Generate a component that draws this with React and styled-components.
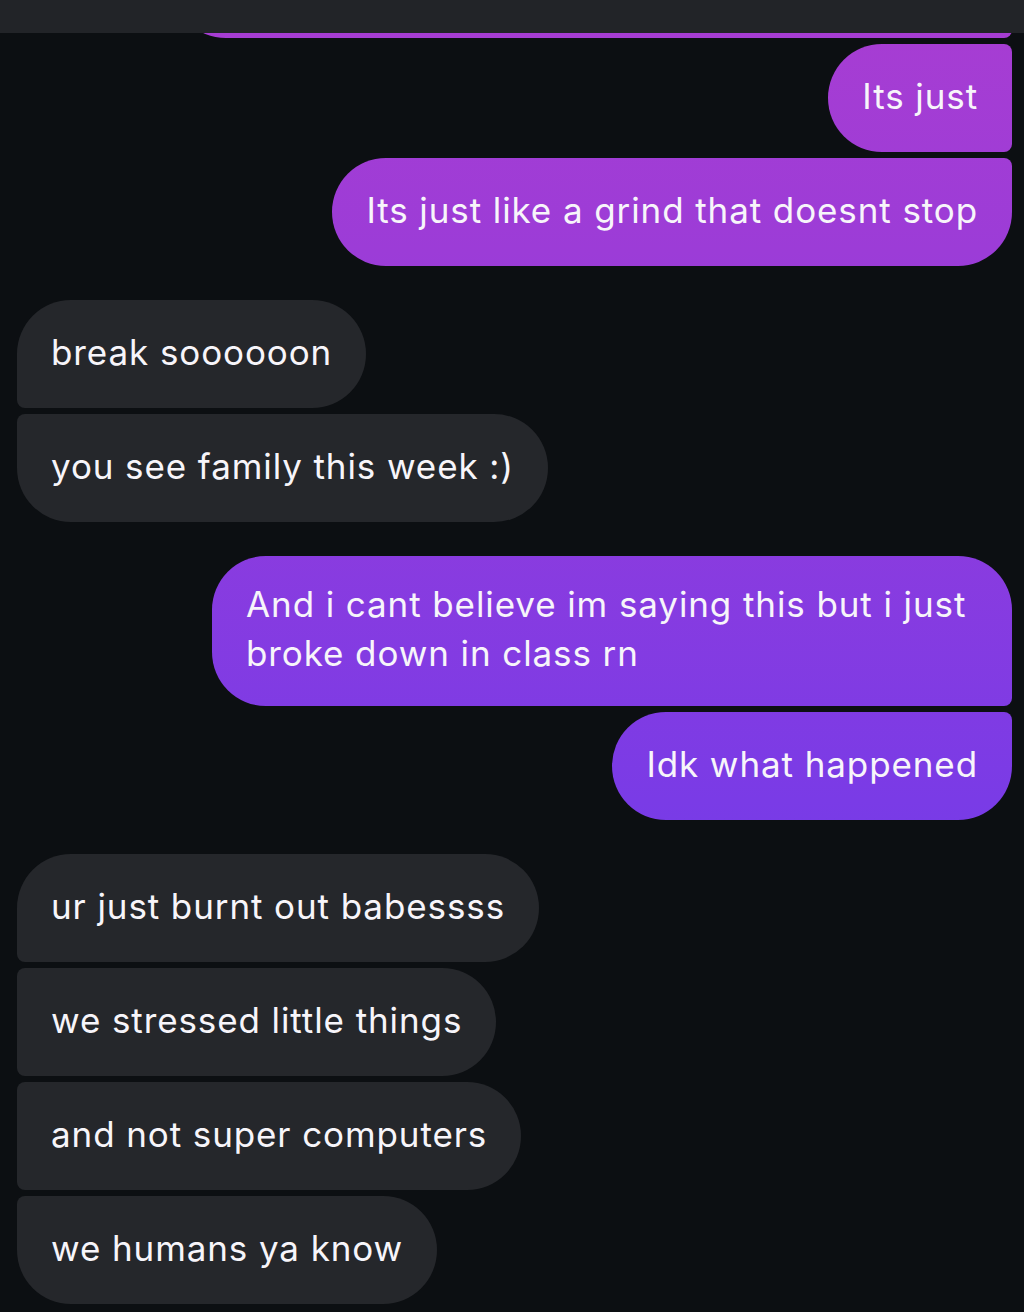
import React from 'react';
import styled, { createGlobalStyle, css } from 'styled-components';

const GlobalStyle = createGlobalStyle`
  html, body {
    margin: 0;
    padding: 0;
    background: #0c0f12;
  }
  * {
    box-sizing: border-box;
  }
`;

const BIG = 54;
const SMALL = 8;

const Screen = styled.div`
  position: relative;
  width: 1024px;
  height: 1312px;
  overflow: hidden;
  background: #0c0f12;
  font-family: Inter, "Noto Sans", sans-serif;
`;

const TopBar = styled.div`
  position: absolute;
  top: 0;
  left: 0;
  right: 0;
  height: 33px;
  background: #222428;
  z-index: 2;
`;

const Thread = styled.div`
  display: flex;
  flex-direction: column;
  gap: 34px;
  padding: 0 12px 0 17px;
  margin-top: -70px;
`;

const Group = styled.div`
  display: flex;
  flex-direction: column;
  align-items: ${props => (props.$mine ? 'flex-end' : 'flex-start')};
  gap: 6px;
`;

const Bubble = styled.div`
  display: flex;
  align-items: center;
  min-height: 108px;
  max-width: ${props => (props.$wide ? 'none' : '800px')};
  padding: 24px 34px 28px;
  font-size: 35px;
  line-height: 49px;
  letter-spacing: 0.9px;
  color: #f7f5fa;
  border-radius: ${props => props.$radius};

  ${props =>
    props.$mine
      ? css`
          background: linear-gradient(180deg, #a83dd2 0px, #9c3cd7 250px, #7a3be6 800px, #5e3af0 1312px) fixed;
        `
      : css`
          background: #25272b;
        `}
`;

const groups = [
  {
    mine: true,
    messages: [
      { hidden: true, width: 840 },
      { text: 'Its just' },
      { text: 'Its just like a grind that doesnt stop' },
    ],
  },
  {
    mine: false,
    messages: [{ text: 'break soooooon' }, { text: 'you see family this week :)' }],
  },
  {
    mine: true,
    messages: [
      { text: 'And i cant believe im saying this but i just broke down in class rn' },
      { text: 'Idk what happened' },
    ],
  },
  {
    mine: false,
    messages: [
      { text: 'ur just burnt out babessss' },
      { text: 'we stressed little things' },
      { text: 'and not super computers' },
      { text: 'we humans ya know' },
    ],
  },
];

// corners: outer side always round, inner side squared off where the group continues
const cornerRadius = (mine, first, last) => {
  const top = first ? BIG : SMALL;
  const bottom = last ? BIG : SMALL;
  return mine
    ? `${BIG}px ${top}px ${bottom}px ${BIG}px`
    : `${top}px ${BIG}px ${BIG}px ${bottom}px`;
};

const App = () => {
  return (
    <Screen>
      <GlobalStyle />
      <TopBar />
      <Thread>
        {groups.map((group, gi) => (
          <Group key={gi} $mine={group.mine}>
            {group.messages.map((msg, mi) => (
              <Bubble
                key={mi}
                $mine={group.mine}
                $wide={Boolean(msg.width)}
                $radius={cornerRadius(group.mine, mi === 0, mi === group.messages.length - 1)}
                style={msg.width ? { width: msg.width } : undefined}
                aria-hidden={msg.hidden || undefined}
              >
                {msg.text}
              </Bubble>
            ))}
          </Group>
        ))}
      </Thread>
    </Screen>
  );
};

export default App;
